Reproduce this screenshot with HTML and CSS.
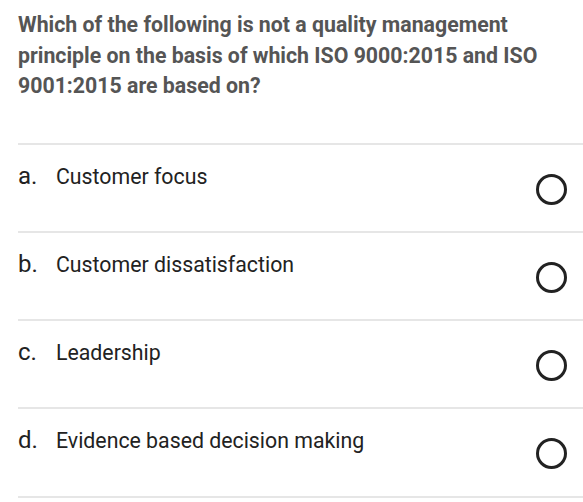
FILE: index.html
```html
<!DOCTYPE html>
<html>
<head>
<meta charset="utf-8">
<link rel="stylesheet" href="styles.css">
</head>
<body>
<div class="page">
  <div class="question">Which of the following is not a quality management principle on the basis of which ISO 9000:2015 and ISO 9001:2015 are based on?</div>
  <div class="options">
    <div class="option"><div class="label"><span class="letter">a.</span><span class="text">Customer focus</span></div><span class="radio"></span></div>
    <div class="option"><div class="label"><span class="letter">b.</span><span class="text">Customer dissatisfaction</span></div><span class="radio"></span></div>
    <div class="option"><div class="label"><span class="letter">c.</span><span class="text">Leadership</span></div><span class="radio"></span></div>
    <div class="option"><div class="label"><span class="letter">d.</span><span class="text">Evidence based decision making</span></div><span class="radio"></span></div>
  </div>
</div>
</body>
</html>
```
FILE: styles.css
```css
html, body {
  margin: 0;
  padding: 0;
  background: #ffffff;
}
.page {
  padding-left: 18px;
  font-family: Roboto, "Liberation Sans", sans-serif;
}
.question {
  padding-top: 10px;
  padding-right: 20px;
  font-size: 21.3px;
  font-weight: 700;
  line-height: 30.7px;
  color: #555555;
}
.options {
  margin-top: 40.5px;
  border-top: 2px solid #e6e6e6;
}
.option {
  display: flex;
  align-items: center;
  justify-content: space-between;
  height: 86.25px;
  border-bottom: 2px solid #e6e6e6;
  padding-right: 16px;
}
.label {
  align-self: flex-start;
  padding-top: 17px;
  display: flex;
  align-items: baseline;
  color: #222222;
}
.letter {
  width: 38px;
  font-size: 24px;
}
.text {
  font-size: 21.3px;
}
.radio {
  width: 25px;
  height: 25px;
  border: 3px solid #222222;
  border-radius: 50%;
  margin-top: 3px;
}
```
